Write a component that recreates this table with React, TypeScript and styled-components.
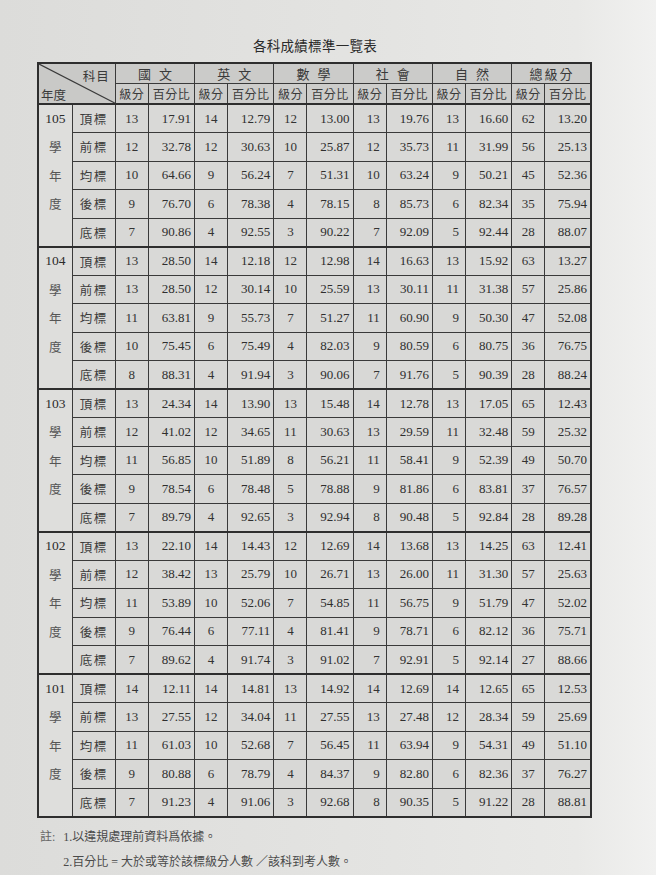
import React from 'react';
import styled, { createGlobalStyle } from 'styled-components';

const GlobalStyle = createGlobalStyle`
  html, body {
    margin: 0;
    padding: 0;
  }
  body {
    background: linear-gradient(to right, #dcdcda 0%, #e4e4e2 60%, #e9e9e7 88%, #f1f1f0 100%);
  }
`;

const subjects = ['國文', '英文', '數學', '社會', '自然', '總級分'];
const levels = ['頂標', '前標', '均標', '後標', '底標'];
const yearChars = ['學', '年', '度', ''];

type Block = { year: string; rows: string[][] };

const blocks: Block[] = [
  {
    year: '105',
    rows: [
      ['13', '17.91', '14', '12.79', '12', '13.00', '13', '19.76', '13', '16.60', '62', '13.20'],
      ['12', '32.78', '12', '30.63', '10', '25.87', '12', '35.73', '11', '31.99', '56', '25.13'],
      ['10', '64.66', '9', '56.24', '7', '51.31', '10', '63.24', '9', '50.21', '45', '52.36'],
      ['9', '76.70', '6', '78.38', '4', '78.15', '8', '85.73', '6', '82.34', '35', '75.94'],
      ['7', '90.86', '4', '92.55', '3', '90.22', '7', '92.09', '5', '92.44', '28', '88.07'],
    ],
  },
  {
    year: '104',
    rows: [
      ['13', '28.50', '14', '12.18', '12', '12.98', '14', '16.63', '13', '15.92', '63', '13.27'],
      ['13', '28.50', '12', '30.14', '10', '25.59', '13', '30.11', '11', '31.38', '57', '25.86'],
      ['11', '63.81', '9', '55.73', '7', '51.27', '11', '60.90', '9', '50.30', '47', '52.08'],
      ['10', '75.45', '6', '75.49', '4', '82.03', '9', '80.59', '6', '80.75', '36', '76.75'],
      ['8', '88.31', '4', '91.94', '3', '90.06', '7', '91.76', '5', '90.39', '28', '88.24'],
    ],
  },
  {
    year: '103',
    rows: [
      ['13', '24.34', '14', '13.90', '13', '15.48', '14', '12.78', '13', '17.05', '65', '12.43'],
      ['12', '41.02', '12', '34.65', '11', '30.63', '13', '29.59', '11', '32.48', '59', '25.32'],
      ['11', '56.85', '10', '51.89', '8', '56.21', '11', '58.41', '9', '52.39', '49', '50.70'],
      ['9', '78.54', '6', '78.48', '5', '78.88', '9', '81.86', '6', '83.81', '37', '76.57'],
      ['7', '89.79', '4', '92.65', '3', '92.94', '8', '90.48', '5', '92.84', '28', '89.28'],
    ],
  },
  {
    year: '102',
    rows: [
      ['13', '22.10', '14', '14.43', '12', '12.69', '14', '13.68', '13', '14.25', '63', '12.41'],
      ['12', '38.42', '13', '25.79', '10', '26.71', '13', '26.00', '11', '31.30', '57', '25.63'],
      ['11', '53.89', '10', '52.06', '7', '54.85', '11', '56.75', '9', '51.79', '47', '52.02'],
      ['9', '76.44', '6', '77.11', '4', '81.41', '9', '78.71', '6', '82.12', '36', '75.71'],
      ['7', '89.62', '4', '91.74', '3', '91.02', '7', '92.91', '5', '92.14', '27', '88.66'],
    ],
  },
  {
    year: '101',
    rows: [
      ['14', '12.11', '14', '14.81', '13', '14.92', '14', '12.69', '14', '12.65', '65', '12.53'],
      ['13', '27.55', '12', '34.04', '11', '27.55', '13', '27.48', '12', '28.34', '59', '25.69'],
      ['11', '61.03', '10', '52.68', '7', '56.45', '11', '63.94', '9', '54.31', '49', '51.10'],
      ['9', '80.88', '6', '78.79', '4', '84.37', '9', '82.80', '6', '82.36', '37', '76.27'],
      ['7', '91.23', '4', '91.06', '3', '92.68', '8', '90.35', '5', '91.22', '28', '88.81'],
    ],
  },
];

// 社會 / 自然 grade columns sit to the right in the print
const rightGrades = [6, 8];

export default function App() {
  return (
    <>
      <GlobalStyle />
      <StyledPage>
        <StyledTitle>各科成績標準一覽表</StyledTitle>
        <StyledTable>
          <colgroup>
            <col style={{ width: 34 }} />
            <col style={{ width: 43 }} />
            {subjects.map((s) => (
              <React.Fragment key={s}>
                <col style={{ width: 33 }} />
                <col style={{ width: 46 }} />
              </React.Fragment>
            ))}
          </colgroup>
          <thead>
            <tr>
              <StyledCorner colSpan={2} rowSpan={2}>
                <StyledCornerInner>
                  <StyledDiagonal viewBox="0 0 100 100" preserveAspectRatio="none">
                    <line x1="0" y1="0" x2="100" y2="100" stroke="#3a3a3a" strokeWidth="1.2" vectorEffect="non-scaling-stroke" />
                  </StyledDiagonal>
                  <StyledCornerTop>科目</StyledCornerTop>
                  <StyledCornerBottom>年度</StyledCornerBottom>
                </StyledCornerInner>
              </StyledCorner>
              {subjects.map((s) => (
                <StyledSubject key={s} colSpan={2} $wide={s.length > 2}>
                  {s}
                </StyledSubject>
              ))}
            </tr>
            <tr>
              {subjects.map((s) => (
                <React.Fragment key={s}>
                  <StyledSubHead>級分</StyledSubHead>
                  <StyledSubHead>百分比</StyledSubHead>
                </React.Fragment>
              ))}
            </tr>
          </thead>
          <tbody>
            {blocks.map((block, bi) =>
              block.rows.map((row, ri) => (
                <StyledRow key={block.year + ri} $blockStart={ri === 0 && bi > 0}>
                  <StyledYearCell $first={ri === 0}>{ri === 0 ? block.year : yearChars[ri - 1]}</StyledYearCell>
                  <StyledLevelCell>{levels[ri]}</StyledLevelCell>
                  {row.map((v, ci) =>
                    ci % 2 === 0 ? (
                      <StyledGrade key={ci} $right={rightGrades.includes(ci)}>
                        {v}
                      </StyledGrade>
                    ) : (
                      <StyledPercent key={ci}>{v}</StyledPercent>
                    )
                  )}
                </StyledRow>
              ))
            )}
          </tbody>
        </StyledTable>
        <StyledNotes>
          <StyledNoteLabel>註:</StyledNoteLabel>
          <StyledNoteList>
            <span>1.以違規處理前資料爲依據。</span>
            <span>2.百分比 = 大於或等於該標級分人數 ／該科到考人數。</span>
          </StyledNoteList>
        </StyledNotes>
      </StyledPage>
    </>
  );
}

const serif = `'Liberation Serif', 'Noto Sans CJK TC', serif`;

const StyledPage = styled.div`
  width: 656px;
  height: 875px;
  box-sizing: border-box;
  padding: 37px 0 0 37px;
  font-family: ${serif};
  color: #2b2b2b;
  overflow: hidden;
`;

const StyledTitle = styled.div`
  width: 556px;
  text-align: center;
  font-size: 13.5px;
  line-height: 20px;
  height: 25px;
  letter-spacing: 0.3px;
  color: #2a2a2a;
`;

const StyledTable = styled.table`
  border-collapse: collapse;
  table-layout: fixed;
  width: 555px;
  border: 2px solid #2e2e2e;
  font-size: 13px;

  td,
  th {
    border: 1px solid #3a3a3a;
    padding: 0;
    font-weight: normal;
  }
`;

const StyledCorner = styled.th`
  background: #c9c9c7;
  height: 39px;
  border-bottom: 2px solid #2e2e2e !important;
`;

const StyledCornerInner = styled.div`
  position: relative;
  height: 39px;
  display: flex;
  flex-direction: column;
  justify-content: space-between;
  font-size: 12.5px;
  color: #3a3a3a;
`;

const StyledDiagonal = styled.svg`
  position: absolute;
  inset: 0;
  width: 100%;
  height: 100%;
`;

const StyledCornerTop = styled.span`
  align-self: flex-end;
  padding: 2px 5px 0 0;
  letter-spacing: 1px;
`;

const StyledCornerBottom = styled.span`
  align-self: flex-start;
  padding: 0 0 1px 2px;
`;

const StyledSubject = styled.th<{ $wide?: boolean }>`
  background: #cbcbc9;
  height: 19px;
  text-align: center;
  font-size: 13px;
  letter-spacing: ${(p) => (p.$wide ? '2px' : '8px')};
  text-indent: ${(p) => (p.$wide ? '2px' : '8px')};
  color: #3a3a3a;
`;

const StyledSubHead = styled.th`
  background: #cdcdcb;
  height: 19px;
  font-size: 12px;
  text-align: center;
  color: #3a3a3a;
  letter-spacing: 0.5px;
  white-space: nowrap;
  border-bottom: 2px solid #2e2e2e !important;
`;

const StyledRow = styled.tr<{ $blockStart?: boolean }>`
  height: 28.5px;

  td {
    border-top: ${(p) => (p.$blockStart ? '2px solid #2e2e2e' : '1px solid #3a3a3a')};
  }
`;

const StyledYearCell = styled.td<{ $first?: boolean }>`
  background: #dededc;
  text-align: center;
  font-size: ${(p) => (p.$first ? '13.5px' : '12.5px')};
  color: ${(p) => (p.$first ? '#2b2b2b' : '#555')};
  border-top-color: ${(p) => (p.$first ? '#2e2e2e' : 'transparent')} !important;
  border-top-width: ${(p) => (p.$first ? '' : '0')} !important;
  border-bottom: none !important;
`;

const StyledLevelCell = styled.td`
  background: #d9d9d7;
  text-align: center;
  font-size: 12.5px;
  letter-spacing: 1.5px;
  color: #3c3c3c;
`;

const StyledGrade = styled.td<{ $right?: boolean }>`
  background: #d8d8d6;
  text-align: ${(p) => (p.$right ? 'right' : 'center')};
  padding-right: ${(p) => (p.$right ? '6px' : '0')} !important;
  color: #333;
`;

const StyledPercent = styled.td`
  background: #d9d9d7;
  text-align: right;
  padding-right: 3px !important;
  color: #2e2e2e;
`;

const StyledNotes = styled.div`
  display: flex;
  gap: 8px;
  margin-top: 7px;
  padding-left: 3px;
  font-size: 12px;
  line-height: 25px;
  color: #4a4a4a;
`;

const StyledNoteLabel = styled.span`
  color: #666;
`;

const StyledNoteList = styled.div`
  display: flex;
  flex-direction: column;
`;
